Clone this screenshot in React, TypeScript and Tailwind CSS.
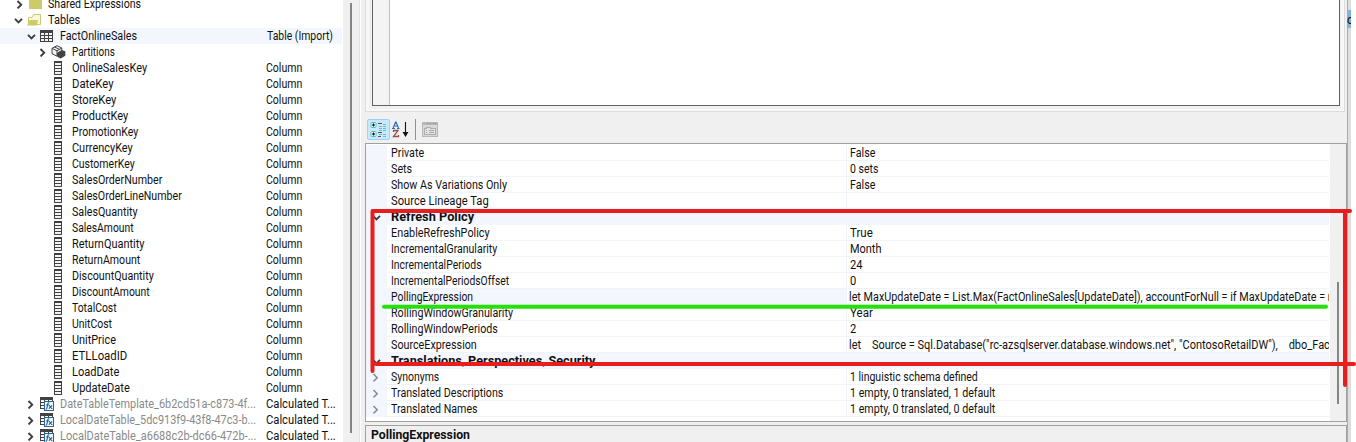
import React, { useLayoutEffect, useRef, useState } from "react";

/* Text condensed horizontally so that it takes up the given width. */
function Fit({ w, children }: { w: number; children: string }) {
  const ref = useRef<HTMLSpanElement>(null);
  const [scale, setScale] = useState(1);
  useLayoutEffect(() => {
    if (ref.current) setScale((w + 1) / ref.current.offsetWidth);
  }, [w, children]);
  return (
    <span className="block shrink-0" style={{ width: w + 1 }}>
      <span ref={ref} className="inline-block origin-left align-top whitespace-pre" style={{ transform: `scaleX(${scale})` }}>
        {children}
      </span>
    </span>
  );
}

function Chevron({ open = false, light = false }: { open?: boolean; light?: boolean }) {
  return (
    <svg width="9" height="9" viewBox="0 0 9 9" className="block shrink-0" fill="none" stroke={light ? "#8a8a8a" : "#3c3c3c"} strokeWidth={light ? 1.5 : 1.9}>
      {open ? <path d="M1 2.800 4.500 6.300 8 2.800" /> : <path d="M2.500 1 6.200 4.700 2.500 8.400" />}
    </svg>
  );
}

function ColumnIcon() {
  return (
    <svg width="8" height="14" viewBox="0 0 8 14" className="block" shapeRendering="crispEdges">
      <path d="M0 0h8v14H0z" fill="#424242" />
      <path d="M1 2h6v2H1zM1 5h6v2H1zM1 8h6v2H1zM1 11h6v2H1z" fill="#f3f3f3" />
    </svg>
  );
}

function TableIcon() {
  return (
    <svg width="14" height="12" viewBox="0 0 14 12" className="block" shapeRendering="crispEdges">
      <path d="M0 0h13v12H0z" fill="#424242" />
      <path d="M1 3h3v2H1zM5 3h3v2H5zM9 3h3v2H9zM1 6h3v2H1zM5 6h3v2H5zM9 6h3v2H9zM1 9h3v2H1zM5 9h3v2H5zM9 9h3v2H9z" fill="#f3f3f3" />
    </svg>
  );
}

function CalcTableIcon() {
  return (
    <svg width="14" height="14" viewBox="0 0 14 14" className="block">
      <g shapeRendering="crispEdges">
        <path d="M0 0h13v12H0z" fill="#424242" />
        <path d="M1 3h3v2H1zM5 3h3v2H5zM9 3h3v2H9zM1 6h3v2H1zM1 9h3v2H1z" fill="#f3f3f3" />
        <path d="M4 4h10v10H4z" fill="#2a659c" />
        <path d="M5 5h8v8H5z" fill="#f6f8fa" />
      </g>
      <path d="M9.400 5.800c-1.300-.4-1.600.5-1.800 1.800L7 11q-.3 1.300-1.300 1.100M6.200 8h2.800M9 8.400c1.400 0 1.300 3.300 3.400 3.200M12.200 8.400l-3.300 3.300" fill="none" stroke="#1f5f99" strokeWidth="1.100" />
    </svg>
  );
}

function PartitionsIcon() {
  return (
    <svg width="15" height="14" viewBox="0 0 15 14" className="block">
      <path d="M6 .7 10.800 3v3L6.500 8v3.500L1 8.700V3.300z" fill="#f1f1f1" stroke="#424242" />
      <path d="M1 3.300 6 5.800 10.800 3M6 5.800V11M3.600 2 8.300 4.300" fill="none" stroke="#424242" />
      <path d="M7 7.500 10.500 5l3.800 1.300v4.400L9.800 13.500 7 12.300z" fill="#424242" />
    </svg>
  );
}

function Folder({ open = false }: { open?: boolean }) {
  return (
    <svg width="14" height="12" viewBox="0 0 14 12" className="block">
      {open ? (
        <>
          <path d="M1.500 9V3.500H5L6.500.5H13.500v10H10" fill="#f7f6e0" stroke="#cccb67" />
          <path d="M0 11.500 2.500 6H11l-1 5.500z" fill="#cccb67" />
        </>
      ) : (
        <path d="M1 0h13v11H1z" fill="#cccb67" />
      )}
    </svg>
  );
}

const columns: [string, number][] = [
  ["OnlineSalesKey", 74],
  ["DateKey", 40.5],
  ["StoreKey", 43],
  ["ProductKey", 55],
  ["PromotionKey", 65],
  ["CurrencyKey", 60],
  ["CustomerKey", 62],
  ["SalesOrderNumber", 89],
  ["SalesOrderLineNumber", 109],
  ["SalesQuantity", 65],
  ["SalesAmount", 61],
  ["ReturnQuantity", 71],
  ["ReturnAmount", 67],
  ["DiscountQuantity", 81],
  ["DiscountAmount", 77],
  ["TotalCost", 44],
  ["UnitCost", 39],
  ["UnitPrice", 42.5],
  ["ETLLoadID", 54],
  ["LoadDate", 46],
  ["UpdateDate", 57],
];

const calcTables = [
  "DateTableTemplate_6b2cd51a-c873-4f...",
  "LocalDateTable_5dc913f9-43f8-47c3-b...",
  "LocalDateTable_a6688c2b-dc66-472b-...",
];

function Tree() {
  return (
    <div className="flex h-[442px] w-[343px] shrink-0 flex-col overflow-hidden bg-white">
      <div className="-mt-1 flex h-4 shrink-0 items-center pl-[15px]">
        <Chevron />
        <div className="ml-1 w-5"><Folder /></div>
        <Fit w={92}>Shared Expressions</Fit>
      </div>
      <div className="flex h-4 shrink-0 items-center pl-[14px]">
        <Chevron open />
        <div className="ml-1 w-[21px]"><Folder open /></div>
        <Fit w={31}>Tables</Fit>
      </div>
      <div className="flex h-4 w-[342px] shrink-0 items-center bg-[#f3f7fd] pl-[27px]">
        <Chevron open />
        <div className="ml-1 w-5"><TableIcon /></div>
        <div className="w-[207px]"><Fit w={76}>FactOnlineSales</Fit></div>
        <Fit w={65}>Table (Import)</Fit>
      </div>
      <div className="flex h-4 shrink-0 items-center pl-[38px]">
        <Chevron />
        <div className="ml-1 w-[21px]"><PartitionsIcon /></div>
        <Fit w={42}>Partitions</Fit>
      </div>
      {columns.map(([name, w]) => (
        <div key={name} className="flex h-4 shrink-0 items-center pl-[54px]">
          <div className="w-[18px]"><ColumnIcon /></div>
          <div className="w-[194px]"><Fit w={w}>{name}</Fit></div>
          <Fit w={35}>Column</Fit>
        </div>
      ))}
      {calcTables.map((name) => (
        <div key={name} className="flex h-4 shrink-0 items-center pl-[26px]">
          <Chevron />
          <div className="ml-[5px] w-5"><CalcTableIcon /></div>
          <div className="w-[206px] text-[#8a8a8a]"><Fit w={195}>{name}</Fit></div>
          <Fit w={69}>Calculated T...</Fit>
        </div>
      ))}
    </div>
  );
}

type Row = { name: string; w: number; value?: string; vw?: number; kind?: "header" | "expand" | "selected" };

const rows: Row[] = [
  { name: "Private", w: 32, value: "False", vw: 24 },
  { name: "Sets", w: 20.5, value: "0 sets", vw: 27 },
  { name: "Show As Variations Only", w: 115, value: "False", vw: 24 },
  { name: "Source Lineage Tag", w: 97 },
  { name: "Refresh Policy", w: 82, kind: "header" },
  { name: "EnableRefreshPolicy", w: 97.5, value: "True", vw: 22 },
  { name: "IncrementalGranularity", w: 105, value: "Month", vw: 30 },
  { name: "IncrementalPeriods", w: 89.5, value: "24", vw: 12 },
  { name: "IncrementalPeriodsOffset", w: 117, value: "0", vw: 5.5 },
  { name: "PollingExpression", w: 81, value: "let MaxUpdateDate = List.Max(FactOnlineSales[UpdateDate]), accountForNull = if MaxUpdateDate = n", vw: 484, kind: "selected" },
  { name: "RollingWindowGranularity", w: 121, value: "Year", vw: 22 },
  { name: "RollingWindowPeriods", w: 106, value: "2", vw: 5.5 },
  { name: "SourceExpression", w: 85, value: 'let    Source = Sql.Database("rc-azsqlserver.database.windows.net", "ContosoRetailDW"),    dbo_Fac', vw: 480 },
  { name: "Translations, Perspectives, Security", w: 204, kind: "header" },
  { name: "Synonyms", w: 47, value: "1 linguistic schema defined", vw: 127, kind: "expand" },
  { name: "Translated Descriptions", w: 111, value: "1 empty, 0 translated, 1 default", vw: 144, kind: "expand" },
  { name: "Translated Names", w: 86, value: "1 empty, 0 translated, 0 default", vw: 144, kind: "expand" },
];

function PropertyRow({ row }: { row: Row }) {
  if (row.kind === "header") {
    return (
      <div className="flex h-4 shrink-0 items-center bg-[#f3f7fd] pl-[6px] font-bold">
        <Chevron open />
        <div className="ml-[10px]"><Fit w={row.w}>{row.name}</Fit></div>
      </div>
    );
  }
  return (
    <div className="flex h-4 shrink-0">
      <div className="flex w-[21px] shrink-0 items-center bg-[#f3f7fd] pl-[5px]">{row.kind === "expand" && <Chevron light />}</div>
      <div className={row.kind === "selected" ? "w-[459px] shrink-0 border-b border-[#eff3fa] bg-[#f3f7fd] pl-1" : "w-[459px] shrink-0 border-b border-[#eff3fa] pl-1"}>
        <Fit w={row.w}>{row.name}</Fit>
      </div>
      <div className={(row.vw ?? 0) > 400 ? "min-w-0 flex-1 overflow-hidden border-b border-l border-[#eff3fa] pl-[2px]" : "min-w-0 flex-1 overflow-hidden border-b border-l border-[#eff3fa] pl-[3px]"}>
        {row.value && <Fit w={row.vw ?? 0}>{row.value}</Fit>}
      </div>
    </div>
  );
}

function Toolbar() {
  return (
    <div className="flex h-[31px] shrink-0 items-start pt-[7px] pl-[2px]">
      <div className="flex h-[21px] w-[23px] items-center justify-center rounded-[2px] border border-[#99d1ff] bg-[#cce8ff]">
        <svg width="17" height="17" viewBox="0 0 17 17">
          <g fill="#fff" stroke="#45c5c5">
            <rect x="1" y="1.500" width="5" height="5" rx="1" />
            <rect x="1" y="10.500" width="5" height="5" rx="1" />
          </g>
          <path d="M2 4h3M3.500 2.500v3M2 13h3M3.500 11.500v3" stroke="#111" strokeWidth="1.200" />
          <path d="M8 2.500h4M8 11.500h4M8 15.500h3" stroke="#555" />
          <path d="M9 5.500h3M13 5.500h3M9 7.500h3M13 7.500h3M9 9.500h3M13 9.500h3M13 13.500h3M13 15.500h3M13 3.500h3M9 13.500h3" stroke="#55c6cd" />
        </svg>
      </div>
      <svg width="17" height="17" viewBox="0 0 17 17" className="mt-[2px] ml-[2px]" fill="none">
        <path d="M1.200 7 3.500 1h.5L6.500 7M2 5h3.500M0 7.500h3M5 7.500h2.500" stroke="#2f6fc0" strokeWidth="1.200" />
        <path d="M1.500 9.500H6L1.500 15.500H7M1.500 9v2M6.500 14v2" stroke="#935050" strokeWidth="1.300" />
        <path d="M13.500 1v12M11.500 11.500l2 3.500 2-3.500z" stroke="#111" strokeWidth="1.100" fill="#111" />
      </svg>
      <div className="ml-[6px] h-[21px] w-px bg-[#909090]" />
      <svg width="16" height="15" viewBox="0 0 16 15" className="mt-[3px] ml-[6px]" fill="none" shapeRendering="crispEdges">
        <rect x=".5" y=".5" width="15" height="14" fill="#d8d8d8" stroke="#b8b8b8" />
        <path d="M1 2h14" stroke="#b8b8b8" strokeWidth="2" />
        <path d="M5 1.500h1M8 1.500h1M11 1.500h1M13 1.500h1" stroke="#8a8a8a" />
        <path d="M2.500 12.500v-6h2v-1h4v1h5v6z" fill="#e4e4e4" stroke="#acacac" />
        <path d="M4 8.500h1M7 8.500h5M4 10.500h1M7 10.500h5" stroke="#a8a8a8" />
      </svg>
    </div>
  );
}

export default function App() {
  return (
    <div className="relative flex h-[442px] w-[1356px] overflow-hidden bg-[#f0f0f0] font-['Roboto','Liberation_Sans',sans-serif] text-[12px] leading-4 whitespace-nowrap text-[#111]">
      <Tree />
      <div className="w-[16px] shrink-0 pt-[3px] pl-[7px]">
        <div className="h-[430px] w-[2px] bg-[#858585]" />
      </div>
      <div className="w-[6px] shrink-0 border-l border-[#e3e3e3]">
        <div className="h-full w-px bg-white" />
      </div>
      <div className="flex w-[982px] shrink-0 flex-col">
        <div className="h-[112px] w-[980px] shrink-0 border-x border-b border-[#dcdcdc] bg-[#f8f8f8] px-[3px] pb-[2px]">
          <div className="h-full bg-[#f0f0f0] px-[3px] pb-[3px]">
            <div className="flex h-full w-[968px] border-x border-b border-[#646464] bg-white">
              <div className="w-[17px] border-r border-[#c0c0c0] bg-[#f4f4f4]" />
            </div>
          </div>
        </div>
        <Toolbar />
        <div className="flex h-[279px] shrink-0 border border-[#a0a0a0] bg-white">
          <div className="flex w-[963px] flex-col overflow-hidden pt-px">
            {rows.map((row) => <PropertyRow key={row.name} row={row} />)}
          </div>
          <div className="ml-px flex flex-1 bg-[#f0f0f0] pt-[138px] pl-[7px]">
            <div className="h-[122px] w-[2px] bg-[#858585]" />
          </div>
        </div>
        <div className="mt-[3px] flex-1 border-x border-t border-[#a0a0a0] pt-px pl-[5px] font-bold">
          <Fit w={98}>PollingExpression</Fit>
        </div>
      </div>
      <div className="flex w-1 shrink-0 flex-col border-l border-[#ababab] bg-[#dedede] pt-[10px]">
        <div className="-ml-px h-[18px] overflow-hidden bg-[#84b2d9] pt-[2px]">c</div>
      </div>
      <div className="flex-1 bg-white" />
      <svg className="pointer-events-none absolute inset-0" width="1356" height="442" viewBox="0 0 1356 442" fill="none" strokeLinecap="round">
        <path d="M372.500 211H1350M372.500 211V371M376 364H1354M1345 213V385" stroke="#e61e1e" strokeWidth="4" />
        <path d="M384 306.800H1326" stroke="#26e00a" strokeWidth="4" />
      </svg>
    </div>
  );
}
